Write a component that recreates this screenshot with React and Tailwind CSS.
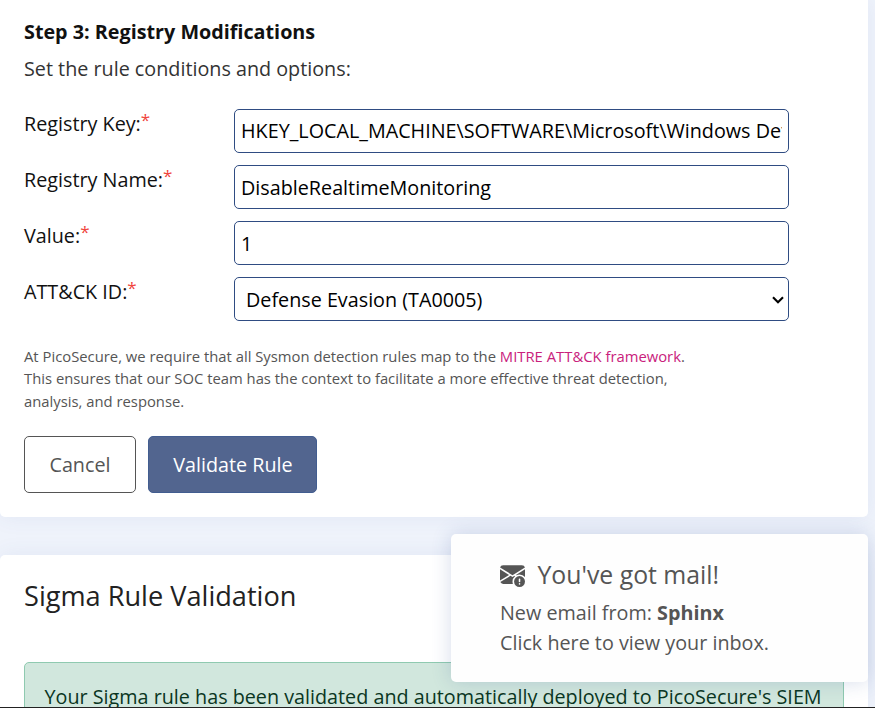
import { BsEnvelopeExclamationFill } from 'react-icons/bs';

const fieldClass =
  'block h-full w-full rounded-[5px] border border-[#2f4c82] bg-white px-[6px] text-[19.75px] text-black outline-none';

function Field({ label, children }) {
  return (
    <div className="flex h-[44.2px]">
      <label className="w-[210px] shrink-0 whitespace-nowrap leading-[29px] text-[#111]">
        {label}
        <sup className="top-[-5px] text-[17px] leading-none text-[#f0443c]">*</sup>
      </label>
      <div className="w-[555px]">{children}</div>
    </div>
  );
}

export default function App() {
  return (
    <div className="relative h-[708px] w-[875px] overflow-hidden bg-[#eff3fb] font-['Open_Sans','Noto_Sans',sans-serif] text-[19.75px] text-[#333]">
      <section className="h-[517px] w-[868px] rounded-b-[5px] bg-white px-6 pt-[17px] shadow-[0_0_22px_rgba(60,90,160,0.08)]">
        <h2 className="whitespace-nowrap leading-[30px] font-bold text-[#111]">Step 3: Registry Modifications</h2>
        <p className="mt-[7px] whitespace-nowrap leading-[30px]">Set the rule conditions and options:</p>

        <div className="mt-[24.6px] flex flex-col gap-3">
          <Field label="Registry Key:">
            <input
              className={fieldClass + ' pb-[0.5px]'}
              defaultValue="HKEY_LOCAL_MACHINE\SOFTWARE\Microsoft\Windows Defender\Real-Time Protection"
            />
          </Field>
          <Field label="Registry Name:">
            <input className={fieldClass + ' pt-[1px]'} defaultValue="DisableRealtimeMonitoring" />
          </Field>
          <Field label="Value:">
            <input className={fieldClass + ' pt-[1px]'} defaultValue="1" />
          </Field>
          <Field label="ATT&CK ID:">
            <div className="relative h-[43.5px]">
              <select className="block h-full w-full appearance-none rounded-[5px] border border-[#2f4c82] bg-white px-[11px] pt-[2px] text-[19.75px] text-black outline-none">
                <option>Defense Evasion (TA0005)</option>
              </select>
              <svg
                className="pointer-events-none absolute top-[19px] right-[5px] h-[8px] w-[12px]"
                viewBox="0 0 12 8"
                fill="none"
                stroke="#000"
                strokeWidth="2.1"
              >
                <path d="M1 1.2 6 6.2 11 1.2" />
              </svg>
            </div>
          </Field>
        </div>

        <div className="mt-[23.8px] text-[14.82px] leading-[22.3px] whitespace-nowrap text-[#555]">
          <p>
            At PicoSecure, we require that all Sysmon detection rules map to the{' '}
            <a className="text-[#c9217c]">MITRE ATT&amp;CK framework</a>.
          </p>
          <p>This ensures that our SOC team has the context to facilitate a more effective threat detection,</p>
          <p>analysis, and response.</p>
        </div>

        <div className="mt-[24.2px] flex gap-3">
          <button className="h-[56.5px] w-28 rounded-[5px] border border-[#555] bg-white pt-[1px] text-[#555]">
            Cancel
          </button>
          <button className="h-[56.5px] w-[169px] rounded-[5px] border border-[#425d90] bg-[#52658f] pt-[1px] pl-[1px] whitespace-nowrap text-white">
            Validate Rule
          </button>
        </div>
      </section>

      <section className="mt-[38px] h-[153px] w-[868px] rounded-t-[5px] bg-white px-6 pt-[21px] shadow-[0_0_22px_rgba(60,90,160,0.08)]">
        <h1 className="text-[27.15px] leading-[40px] whitespace-nowrap text-[#222]">Sigma Rule Validation</h1>
        <div className="mt-[46px] h-[80px] w-[820px] rounded-[5px] border border-[#8fcab0] bg-[#d1e7dd] pt-[19px] pl-[19.5px] leading-[30px] whitespace-nowrap text-[#0a3622]">
          Your Sigma rule has been validated and automatically deployed to PicoSecure's SIEM
        </div>
      </section>

      <aside className="absolute top-[534px] left-[451px] h-[148px] w-[417px] rounded-[5px] bg-[#fefefe] pt-[21px] pl-[49px] whitespace-nowrap text-[#555] shadow-[0_0_20px_rgba(50,80,150,0.2)]">
        <div className="flex items-center leading-[38px]">
          <BsEnvelopeExclamationFill className="size-[25px]" />
          <span className="ml-[12.5px] text-[24.8px]">You've got mail!</span>
        </div>
        <p className="mt-[5px] leading-[30px]">
          New email from: <b>Sphinx</b>
        </p>
        <p className="leading-[30px]">Click here to view your inbox.</p>
      </aside>

      <div className="absolute bottom-0 left-0 h-px w-full bg-[#222]" />
    </div>
  );
}
